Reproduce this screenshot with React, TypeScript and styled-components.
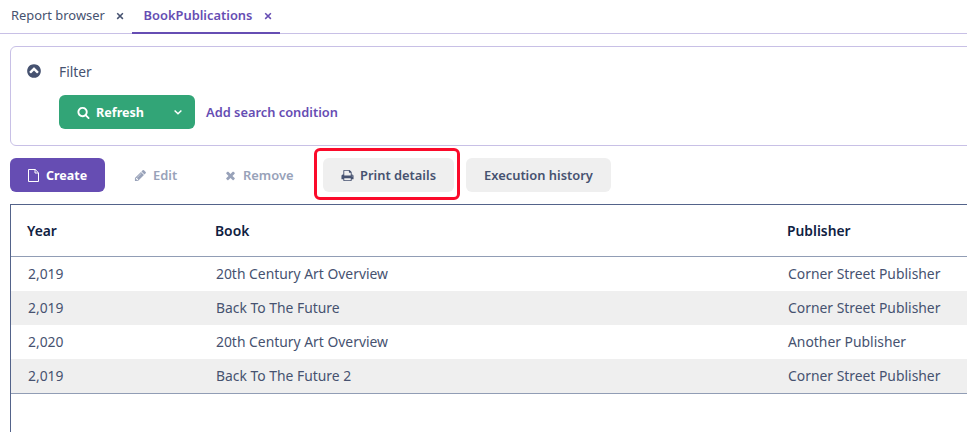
import React from 'react';
import styled, { createGlobalStyle, css } from 'styled-components';

const GlobalStyle = createGlobalStyle`
  *, *::before, *::after { box-sizing: border-box; }
  html, body { margin: 0; background: #fff; overflow: hidden; }
  body { font-family: 'Noto Sans', 'Open Sans', sans-serif; font-size: 14px; color: #465270; }
  button { font: inherit; margin: 0; }
`;

const Page = styled.div`
  height: 432px;
  width: 100%;
  overflow: hidden;
  display: flex;
  flex-direction: column;
`;

const TabBar = styled.nav`
  flex: none;
  display: flex;
  height: 34px;
  border-bottom: 1px solid #c8c0e6;
`;

const Tab = styled.div<{ $active?: boolean }>`
  display: flex;
  align-items: center;
  height: 34px;
  padding: 0 8px 2px 11px;
  font-size: 12.9px;
  ${(p) =>
    p.$active &&
    css`
      color: #664db3;
      font-weight: 600;
      border-bottom: 2px solid #664db3;
      padding-bottom: 0;
      padding-left: 11.5px;
    `}
`;

const TabLabel = styled.span<{ $width: number }>`
  width: ${(p) => p.$width}px;
  padding-bottom: 3px;
  white-space: nowrap;
`;

const FilterPanel = styled.section`
  flex: none;
  display: flex;
  height: 100px;
  margin: 12px -10px 0 10px;
  padding-left: 15px;
  border: 1px solid #c8c0e6;
  border-radius: 6px;
`;

const CollapseIcon = styled.div`
  width: 33px;
  padding-top: 16px;
`;

const FilterBody = styled.div`
  display: flex;
  flex-direction: column;
`;

const FilterTitle = styled.div`
  height: 48px;
  padding-top: 1px;
  line-height: 48px;
  font-size: 13.8px;
`;

const FilterActions = styled.div`
  display: flex;
  align-items: center;
`;

const RefreshButton = styled.button`
  display: flex;
  align-items: center;
  width: 136px;
  height: 34px;
  padding: 0 12px 0 17.5px;
  border: 0;
  border-radius: 6px;
  background: #32a577;
  color: #fff;
  font-size: 12.6px;
  font-weight: 700;
`;

const RefreshLabel = styled.span`
  flex: 1;
  padding-left: 6.5px;
  text-align: left;
`;

const LinkButton = styled.button`
  margin-left: 11px;
  padding: 0;
  border: 0;
  background: none;
  color: #664db3;
  font-size: 12.85px;
  font-weight: 600;
  white-space: nowrap;
`;

const Toolbar = styled.div`
  flex: none;
  display: flex;
  height: 34px;
  margin: 12px 0 12px 10px;
`;

type Tone = 'primary' | 'disabled' | 'plain';

const tones = {
  primary: css`background: #664db3; color: #fff; font-weight: 700; font-size: 12.5px; padding-left: 17px;`,
  disabled: css`background: transparent; color: #98a2b9; padding-left: 29px;`,
  plain: css`background: #efefef; color: #465270; padding-left: 18px;`,
};

const ToolButton = styled.button<{ $tone: Tone; $width: number }>`
  display: flex;
  align-items: center;
  gap: 6px;
  width: ${(p) => p.$width}px;
  height: 34px;
  padding: 0;
  border: 0;
  border-radius: 6px;
  font-size: 12.9px;
  font-weight: 600;
  white-space: nowrap;
  ${(p) => tones[p.$tone]}
`;

const Highlight = styled.div`
  position: relative;
  margin: 0 12px 0 8px;
  &::after {
    content: '';
    position: absolute;
    inset: -10px -6px -8px -9px;
    border: 3px solid #fb0a2a;
    border-radius: 6px;
    pointer-events: none;
  }
`;

const columns = '188px 572px 1fr';

const Table = styled.div`
  flex: 1;
  margin-left: 10px;
  border: solid #53638a;
  border-width: 1px 0 0 1px;
`;

const HeaderRow = styled.div`
  display: grid;
  grid-template-columns: ${columns};
  height: 52px;
  padding-left: 16px;
  line-height: 51px;
  border-bottom: 1px solid #919db5;
  color: #0f2142;
  font-size: 13.85px;
  font-weight: 600;
`;

const TableBody = styled.div`
  border-bottom: 1px solid #919db5;
`;

const Row = styled.div`
  display: grid;
  grid-template-columns: ${columns};
  height: 34px;
  padding-left: 17px;
  line-height: 34px;
  font-size: 13.88px;
  &:nth-child(even) { background: #efefef; }
`;

const Icon = styled.svg<{ $size: number }>`
  display: block;
  flex: none;
  width: ${(p) => p.$size}px;
  height: ${(p) => p.$size}px;
  fill: currentColor;
`;

const glyphs = {
  search:
    'M1216 832q0-185-131.5-316.5t-316.5-131.5-316.5 131.5-131.5 316.5 131.5 316.5 316.5 131.5 316.5-131.5 131.5-316.5zm512 832q0 52-38 90t-90 38q-54 0-90-38l-343-342q-179 124-399 124-143 0-273.5-55.5t-225-150-150-225-55.5-273.5 55.5-273.5 150-225 225-150 273.5-55.5 273.5 55.5 225 150 150 225 55.5 273.5q0 220-124 399l343 343q37 37 37 90z',
  pencil:
    'M491 1536l91-91-235-235-91 91v107h128v128h107zm523-928q0-22-22-22-10 0-17 7l-542 542q-7 7-7 17 0 22 22 22 10 0 17-7l542-542q7-7 7-17zm-54-192l416 416-832 832h-416v-416zm683 96q0 53-37 90l-166 166-416-416 166-165q36-38 90-38 53 0 91 38l235 234q37 39 37 91z',
  times:
    'M1490 1322q0 40-28 68l-136 136q-28 28-68 28t-68-28l-294-294-294 294q-28 28-68 28t-68-28l-136-136q-28-28-28-68t28-68l294-294-294-294q-28-28-28-68t28-68l136-136q28-28 68-28t68 28l294 294 294-294q28-28 68-28t68 28l136 136q28 28 28 68t-28 68l-294 294 294 294q28 28 28 68z',
  print:
    'M448 1536h896v-256h-896v256zm0-640h896v-384h-160q-40 0-68-28t-28-68v-160h-640v640zm1152 64q0-26-19-45t-45-19-45 19-19 45 19 45 45 19 45-19 19-45zm128 0v416q0 13-9.5 22.5t-22.5 9.5h-224v160q0 40-28 68t-68 28h-960q-40 0-68-28t-28-68v-160h-224q-13 0-22.5-9.5t-9.5-22.5v-416q0-79 56.5-135.5t135.5-56.5h64v-544q0-40 28-68t68-28h672q40 0 88 20t76 48l152 152q28 28 48 76t20 88v256h64q79 0 135.5 56.5t56.5 135.5z',
  circleUp:
    'M1293 1139l102-102q19-19 19-45t-19-45l-454-454q-19-19-45-19t-45 19l-454 454q-19 19-19 45t19 45l102 102q19 19 45 19t45-19l307-307 307 307q19 19 45 19t45-19zm371-243q0 209-103 385.5t-279.5 279.5-385.5 103-385.5-103-279.5-279.5-103-385.5 103-385.5 279.5-279.5 385.5-103 385.5 103 279.5 279.5 103 385.5z',
};

const Glyph = ({ name, size }: { name: keyof typeof glyphs; size: number }) => (
  <Icon $size={size} viewBox="0 0 1792 1792">
    <path d={glyphs[name]} />
  </Icon>
);

const CloseMark = () => (
  <Icon $size={8} viewBox="0 0 8 8">
    <path d="M1.2 1.2L6.9 6.9M6.9 1.2L1.2 6.9" fill="none" stroke="currentColor" strokeWidth="1.5" />
  </Icon>
);

const FileIcon = () => (
  <Icon $size={13} viewBox="0 0 13 13">
    <path d="M1.5 .5H8.2L11.5 3.8V12.5H1.5Z M8 .5V4H11.5" fill="none" stroke="currentColor" />
  </Icon>
);

const ChevronDown = () => (
  <Icon $size={10} viewBox="0 0 10 10">
    <path d="M1.6 3.5L5 6.7L8.4 3.5" fill="none" stroke="currentColor" strokeWidth="1.5" />
  </Icon>
);

const rows = [
  ['2,019', '20th Century Art Overview', 'Corner Street Publisher'],
  ['2,019', 'Back To The Future', 'Corner Street Publisher'],
  ['2,020', '20th Century Art Overview', 'Another Publisher'],
  ['2,019', 'Back To The Future 2', 'Corner Street Publisher'],
];

export default function App() {
  return (
    <>
      <GlobalStyle />
      <Page>
        <TabBar>
          <Tab>
            <TabLabel $width={105}>Report browser</TabLabel>
            <CloseMark />
          </Tab>
          <Tab $active>
            <TabLabel $width={120.5}>BookPublications</TabLabel>
            <CloseMark />
          </Tab>
        </TabBar>
        <FilterPanel>
          <CollapseIcon>
            <Glyph name="circleUp" size={16} />
          </CollapseIcon>
          <FilterBody>
            <FilterTitle>Filter</FilterTitle>
            <FilterActions>
              <RefreshButton>
                <Glyph name="search" size={13} />
                <RefreshLabel>Refresh</RefreshLabel>
                <ChevronDown />
              </RefreshButton>
              <LinkButton>Add search condition</LinkButton>
            </FilterActions>
          </FilterBody>
        </FilterPanel>
        <Toolbar>
          <ToolButton $tone="primary" $width={95}><FileIcon />Create</ToolButton>
          <ToolButton $tone="disabled" $width={90}><Glyph name="pencil" size={13} />Edit</ToolButton>
          <ToolButton $tone="disabled" $width={120}><Glyph name="times" size={13} />Remove</ToolButton>
          <Highlight>
            <ToolButton $tone="plain" $width={131}><Glyph name="print" size={13} />Print details</ToolButton>
          </Highlight>
          <ToolButton $tone="plain" $width={145}>Execution history</ToolButton>
        </Toolbar>
        <Table>
          <HeaderRow>
            <span>Year</span>
            <span>Book</span>
            <span>Publisher</span>
          </HeaderRow>
          <TableBody>
            {rows.map((cells, i) => (
              <Row key={i}>
                {cells.map((cell, j) => <span key={j}>{cell}</span>)}
              </Row>
            ))}
          </TableBody>
        </Table>
      </Page>
    </>
  );
}
